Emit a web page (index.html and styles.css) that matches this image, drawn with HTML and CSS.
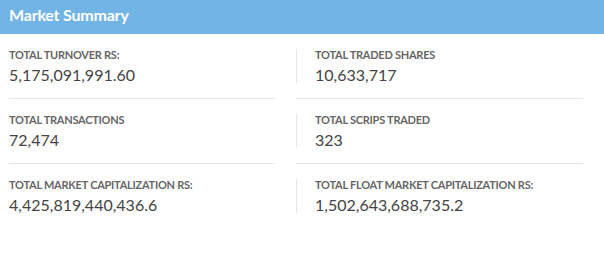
FILE: index.html
```html
<!DOCTYPE html>
<html lang="en">
<head>
    <meta charset="UTF-8">
    <meta name="viewport" content="width=device-width, initial-scale=1.0">
    <title>Market Summary</title>
    <link rel="stylesheet" href="styles.css">
</head>
<body>
    <div class="panel">
        <div class="panel-heading">Market Summary</div>
        <div class="summary">
            <div class="item">
                <div class="label">Total Turnover Rs:</div>
                <div class="value">5,175,091,991.60</div>
            </div>
            <div class="item right">
                <div class="label">Total Traded Shares</div>
                <div class="value">10,633,717</div>
            </div>
            <div class="item">
                <div class="label">Total Transactions</div>
                <div class="value">72,474</div>
            </div>
            <div class="item right">
                <div class="label">Total Scrips Traded</div>
                <div class="value">323</div>
            </div>
            <div class="item last">
                <div class="label">Total Market Capitalization Rs:</div>
                <div class="value">4,425,819,440,436.6</div>
            </div>
            <div class="item right last">
                <div class="label">Total Float Market Capitalization Rs:</div>
                <div class="value">1,502,643,688,735.2</div>
            </div>
        </div>
    </div>
</body>
</html>
```

FILE: styles.css
```css
body {
    margin: 0;
    background-color: #fff;
    font-family: 'Lato', sans-serif;
}
.panel {
    width: 604px;
}
.panel-heading {
    background-color: #72b4e6;
    color: #fff;
    font-weight: bold;
    font-size: 16px;
    letter-spacing: -0.2px;
    height: 34px;
    line-height: 30px;
    padding-left: 9px;
}
.summary {
    display: grid;
    grid-template-columns: 266px 1fr;
    column-gap: 21px;
    padding: 0 21px 0 9px;
}
.item {
    padding: 15px 0 13px;
    border-bottom: 1px solid #e6e6e6;
}
.item .label,
.item .value {
    white-space: nowrap;
}
.item.right {
    padding-left: 19px;
    position: relative;
}
.item.right::before {
    content: '';
    position: absolute;
    left: 0;
    top: 15px;
    height: 34px;
    border-left: 1px solid #e6e6e6;
}
.item.last {
    border-bottom: none;
}
.label {
    font-size: 11px;
    font-weight: bold;
    letter-spacing: -0.25px;
    color: #666;
    text-transform: uppercase;
    line-height: 12px;
}
.value {
    font-size: 16px;
    color: #444;
    line-height: 20px;
    margin-top: 4px;
}
```
